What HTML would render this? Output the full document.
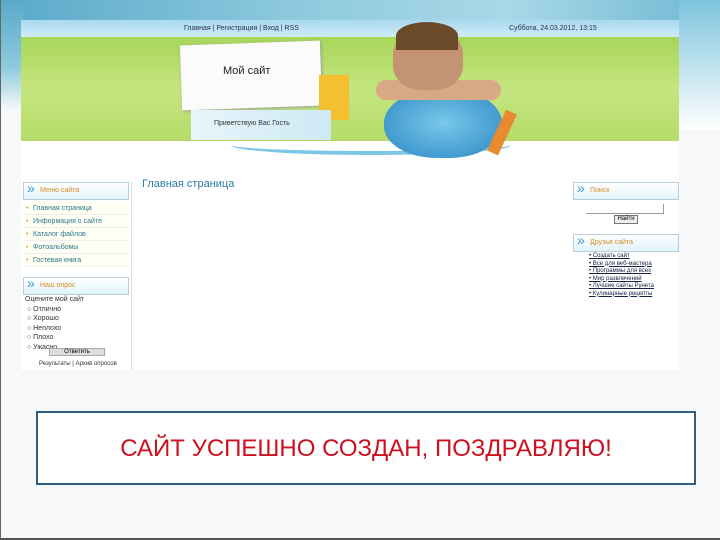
<!DOCTYPE html>
<html><head><meta charset="utf-8"><style>
*{margin:0;padding:0;box-sizing:border-box}
body{width:720px;height:540px;position:relative;overflow:hidden;background:#f7f8f9;font-family:"Liberation Sans",sans-serif;border-left:1px solid #666;border-bottom:2px solid #555}
.a{position:absolute}
.t{font-size:7px;color:#333;white-space:nowrap}
.blk{position:absolute;height:18px;background:linear-gradient(#fff,#dff3fb);border:1px solid #bcd;font-size:7px;color:#d98a20;line-height:16px;padding-left:16px}
.blk:before{content:"»";position:absolute;left:3px;top:-3px;font-size:14px;color:#3a9ad0}
.mi{position:absolute;left:22px;width:106px;height:13px;border-bottom:1px solid #eee;font-size:7px;color:#2a7a8a;line-height:13px;padding-left:10px;background:#fffff4}
.mi:before{content:"•";position:absolute;left:3px;color:#e0a030}
</style></head><body>
<div class="a" style="left:0;top:0;width:720px;height:40px;background:linear-gradient(90deg,#5aa9c9,#8cc9dd 40%,#a9d8e8 70%,#6fb8d2)"></div>
<div class="a" style="left:0;top:0;width:22px;height:110px;background:linear-gradient(#5aa9c9,#8cc9dd 60%,#f7f8f9)"></div>
<div class="a" style="left:678px;top:0;width:42px;height:130px;background:linear-gradient(#7cc3dc,#fff)"></div>
<div class="a" style="left:20px;top:20px;width:658px;height:350px;background:#fff"></div>
<div class="a" style="left:20px;top:20px;width:658px;height:17px;background:linear-gradient(#a9d9ef,#cfeaf5)"></div>
<div class="a" style="left:20px;top:37px;width:658px;height:104px;background:linear-gradient(#a7d65a,#c5e57f 50%,#b5dc6a)"></div>
<div class="a" style="left:180px;top:43px;width:140px;height:65px;background:#fbfbfb;transform:rotate(-2deg);box-shadow:1px 1px 3px #999"></div>
<div class="a" style="left:318px;top:75px;width:30px;height:45px;background:#f4c030"></div>
<div class="a" style="left:190px;top:110px;width:140px;height:30px;background:linear-gradient(90deg,#e8f5fb,#cde9f5)"></div>
<div class="a" style="left:230px;top:135px;width:280px;height:20px;border-radius:50%;border-bottom:4px solid #7cc6e6"></div>
<div class="a" style="left:383px;top:88px;width:118px;height:70px;border-radius:50% 50% 45% 45%;background:radial-gradient(#7ac8ea,#2b87c4);"></div>
<div class="a" style="left:375px;top:80px;width:125px;height:20px;border-radius:10px;background:#d9a885"></div>
<div class="a" style="left:392px;top:30px;width:70px;height:60px;border-radius:40%;background:#c39373"></div>
<div class="a" style="left:395px;top:22px;width:62px;height:28px;border-radius:50% 50% 0 0;background:#6b4a2a"></div>
<div class="a" style="left:495px;top:110px;width:12px;height:45px;background:#e88a30;transform:rotate(25deg)"></div>
<div class="a t" style="left:183px;top:25px;color:#235">Главная | Регистрация | Вход | RSS</div>
<div class="a t" style="left:508px;top:25px;color:#235">Суббота, 24.03.2012, 13:15</div>
<div class="a" style="left:222px;top:65px;font-size:11px;color:#222">Мой сайт</div>
<div class="a t" style="left:213px;top:120px">Приветствую Вас Гость</div>
<div class="a" style="left:141px;top:178px;font-size:11px;color:#2a7aa0">Главная страница</div>
<div class="blk" style="left:22px;top:182px;width:106px">Меню сайта</div>
<div class="mi" style="top:202px">Главная страница</div>
<div class="mi" style="top:215px">Информация о сайте</div>
<div class="mi" style="top:228px">Каталог файлов</div>
<div class="mi" style="top:241px">Фотоальбомы</div>
<div class="mi" style="top:254px">Гостевая книга</div>
<div class="blk" style="left:22px;top:277px;width:106px">Наш опрос</div>
<div class="a t" style="left:24px;top:295px;line-height:9.5px">Оцените мой сайт<br>&nbsp;○ Отлично<br>&nbsp;○ Хорошо<br>&nbsp;○ Неплохо<br>&nbsp;○ Плохо<br>&nbsp;○ Ужасно</div>
<div class="a" style="left:48px;top:348px;width:56px;height:8px;background:#ddd;border:1px solid #aaa;font-size:6px;text-align:center;line-height:6px">Ответить</div>
<div class="a t" style="left:38px;top:361px;font-size:6px">Результаты | Архив опросов</div>
<div class="a" style="left:130px;top:182px;width:1px;height:188px;background:#ddd"></div>
<div class="blk" style="left:572px;top:182px;width:106px">Поиск</div>
<div class="a" style="left:585px;top:204px;width:78px;height:10px;border:1px solid #999;border-left:none;border-top:none"></div>
<div class="a" style="left:613px;top:215px;width:24px;height:9px;border:1px solid #777;font-size:6px;text-align:center;background:#eee">Найти</div>
<div class="blk" style="left:572px;top:234px;width:106px">Друзья сайта</div>
<div class="a t" style="left:588px;top:253px;font-size:6px;line-height:7.5px;color:#124;text-decoration:underline">• Создать сайт<br>• Все для веб-мастера<br>• Программы для всех<br>• Мир развлечений<br>• Лучшие сайты Рунета<br>• Кулинарные рецепты</div>
<div class="a" style="left:35px;top:411px;width:660px;height:74px;border:2px solid #2f5f80;background:#fff"></div>
<div class="a" style="left:35px;top:435px;width:660px;text-align:center;font-size:24px;color:#cc1020">САЙТ УСПЕШНО СОЗДАН, ПОЗДРАВЛЯЮ!</div>
</body></html>
